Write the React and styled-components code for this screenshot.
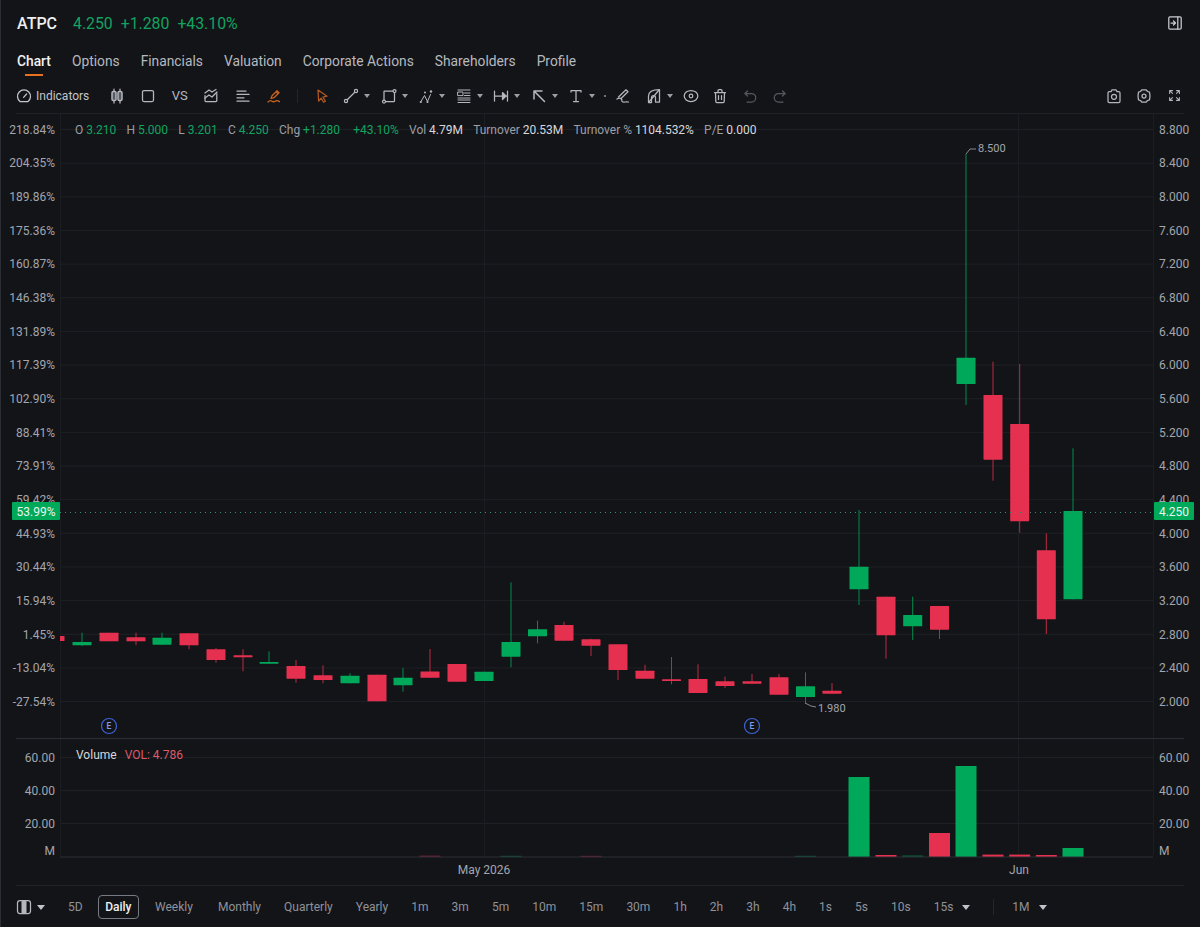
import React from 'react';
import styled, {createGlobalStyle} from 'styled-components';

const GlobalStyle = createGlobalStyle`
    html, body{
        margin: 0;
        padding: 0;
        background: #131418;
    }
    body{
        font-family: Roboto, "Liberation Sans", sans-serif;
    }
`;

const GREEN = '#00a85a';
const RED = '#e5304f';
const GRID = '#1e2026';
const GRID_V = '#1b1d22';

const Page = styled.div`
    width: 1200px;
    height: 927px;
    display: flex;
    flex-direction: column;
    background: #131418;
    box-shadow: inset 1px 0 0 #2b2e35;
    overflow: hidden;
`;

const TitleRow = styled.div`
    height: 46px;
    display: flex;
    align-items: center;
    padding: 0 16px 0 17px;
    font-size: 15.8px;
    color: #12a361;
`;

const Ticker = styled.span`
    color: #eceef0;
    font-weight: 500;
    font-size: 16px;
    margin-right: 16px;
`;

const Quote = styled.span`
    margin-right: 8px;
`;

const CollapseButton = styled.div`
    margin-left: auto;
    margin-right: 1px;
    color: #c9cbd0;
`;

const Tabs = styled.div`
    height: 32px;
    display: flex;
    gap: 21px;
    padding-left: 17px;
`;

const Tab = styled.div`
    position: relative;
    font-size: 13.8px;
    line-height: 30px;
    color: ${p => p.$active ? '#f0f1f3' : '#b6b9bf'};
    font-weight: ${p => p.$active ? 500 : 400};

    &::after{
        content: ${p => p.$active ? "''" : 'none'};
        position: absolute;
        left: 8px;
        right: 8px;
        bottom: 2px;
        height: 2px;
        background: #e8701f;
    }
`;

const Toolbar = styled.div`
    height: 35px;
    display: flex;
    align-items: center;
    padding-left: 16px;
    color: #b4b7bd;
    font-size: 12px;
`;

const IndicatorsButton = styled.div`
    width: 85px;
    display: flex;
    align-items: center;
    gap: 4px;
    color: #c3c5ca;
`;

const Slot = styled.div`
    width: ${p => p.$w || 31.5}px;
    margin-left: ${p => p.$ml || 0}px;
    display: flex;
    justify-content: center;
    align-items: center;
    font-size: 13px;
    flex: none;
    color: ${p => p.$accent ? p.$accent : p.$dim ? '#55585f' : 'inherit'};
`;

const CaretTool = styled.div`
    width: ${p => p.$w || 37.5}px;
    margin-left: ${p => p.$ml || 0}px;
    display: flex;
    align-items: center;
    gap: 5px;
    flex: none;
`;

const Caret = styled.span`
    width: 0;
    height: 0;
    border-left: ${p => p.$bright ? 4 : 3.5}px solid transparent;
    border-right: ${p => p.$bright ? 4 : 3.5}px solid transparent;
    border-top: ${p => p.$bright ? 5 : 4}px solid ${p => p.$bright ? '#c0c3c8' : '#9a9da4'};
    margin-top: 1px;
`;

const VDivider = styled.span`
    width: 1px;
    height: ${p => p.$h || 14}px;
    background: #24262c;
    margin-left: ${p => p.$ml || 0}px;
    flex: none;
`;

const TinyDot = styled.span`
    width: 2px;
    height: 2px;
    border-radius: 50%;
    background: #8d9097;
    margin-left: -2px;
    flex: none;
`;

const RightTools = styled.div`
    margin-left: auto;
    margin-right: 10px;
    display: flex;
`;

const Rule = styled.div`
    height: 1px;
    margin: 0 16px;
    flex: none;
    background: ${p => p.$strong ? '#2c2f36' : '#1f2127'};
`;

const PricePane = styled.div`
    position: relative;
    height: 624px;
    flex: none;
`;

const Legend = styled.div`
    position: absolute;
    left: 75px;
    top: 8px;
    display: flex;
    gap: 10.25px;
    font-size: 12px;
    line-height: 16px;
    letter-spacing: -0.02px;
    color: #9b9ea5;
    white-space: nowrap;
`;

const LegendItem = styled.span`
    margin-left: ${p => p.$ml || 0}px;
`;

const Value = styled.span`
    color: ${p => p.$up ? '#12a361' : '#d6d8db'};
`;

const VolumePane = styled.div`
    position: relative;
    height: 146px;
    flex: none;
`;

const VolumeLegend = styled.div`
    position: absolute;
    left: 76px;
    top: 8px;
    display: flex;
    gap: 8px;
    font-size: 12px;
    line-height: 16px;
    color: #d6d8db;
`;

const VolumeValue = styled.span`
    color: #dc5b68;
`;

const ChartSvg = styled.svg`
    display: block;
    width: 1200px;
    height: 100%;
    font-family: Roboto, "Liberation Sans", sans-serif;
    font-size: 12px;
`;

const BottomBar = styled.div`
    flex: 1;
    display: flex;
    align-items: center;
    padding-left: 16px;
    font-size: 12px;
    color: #8f929a;
`;

const LayoutSwitch = styled.div`
    display: flex;
    align-items: center;
    gap: 5px;
    margin-right: 15px;
    color: #b4b7bd;
`;

const Periods = styled.div`
    display: flex;
    align-items: center;
    gap: 7.05px;
`;

const Period = styled.div`
    height: 24px;
    line-height: 22px;
    padding: 0 ${p => p.$active ? 6.5 : 7}px;
    margin-left: ${p => p.$ml || 0}px;
    box-sizing: border-box;
    border: 1px solid ${p => p.$active ? '#767a83' : 'transparent'};
    border-radius: 4px;
    display: flex;
    align-items: center;
    gap: 9px;
    color: ${p => p.$active ? '#eef0f2' : 'inherit'};
    font-weight: ${p => p.$active ? 500 : 400};
`;

const Icon = styled.svg.attrs({viewBox: '0 0 16 16', fill: 'none', stroke: 'currentColor', strokeWidth: 1.25})`
    width: ${p => p.$size || 16}px;
    height: ${p => p.$size || 16}px;
    display: block;
    flex: none;
    stroke-linecap: round;
    stroke-linejoin: round;
`;

const leftLabels = ['218.84%', '204.35%', '189.86%', '175.36%', '160.87%', '146.38%', '131.89%', '117.39%', '102.90%', '88.41%', '73.91%', '59.42%', '44.93%', '30.44%', '15.94%', '1.45%', '-13.04%', '-27.54%'];
const rightLabels = ['8.800', '8.400', '8.000', '7.600', '7.200', '6.800', '6.400', '6.000', '5.600', '5.200', '4.800', '4.400', '4.000', '3.600', '3.200', '2.800', '2.400', '2.000'];

// [x, up, wickTop, bodyTop, bodyBottom, wickBottom]
const candles = [
    [55, 0, 636, 636, 641, 641],
    [82, 1, 632.7, 642, 645.3, 646],
    [109, 0, 632.7, 632.7, 641.3, 641.3],
    [136, 0, 632.7, 637.3, 641.3, 645],
    [162, 1, 632.7, 637.7, 644.7, 645],
    [189, 0, 633.3, 633.3, 645.3, 649.3],
    [216, 0, 648, 649.3, 660, 662.7],
    [243, 0, 649.3, 655.3, 657.3, 671.3],
    [269, 1, 651.3, 662, 663.7, 663.7],
    [296, 0, 660, 666, 678.7, 682.7],
    [323, 0, 665.3, 675.3, 680, 683.3],
    [350, 1, 673.3, 675.7, 683.3, 683.3],
    [377, 0, 674.7, 674.7, 701.3, 701.3],
    [403, 1, 668, 677.7, 685.3, 691.7],
    [430, 0, 649, 671.5, 677.8, 678],
    [457, 0, 664, 664, 681.7, 681.7],
    [484, 1, 671.7, 671.7, 681, 681],
    [511, 1, 582.3, 642, 656.7, 667.3],
    [537.5, 1, 620.7, 629.3, 636.3, 643.3],
    [564, 0, 621.7, 625, 640.7, 640.7],
    [591, 0, 638.7, 639.3, 645.7, 656],
    [618, 0, 644.3, 644.3, 670, 680],
    [645, 0, 664.7, 670.7, 678.7, 678.7],
    [671.5, 0, 657, 679.3, 681, 684.3],
    [698, 0, 664.3, 679, 693, 693],
    [725, 0, 676.7, 681.3, 686, 688],
    [752, 0, 674, 681.3, 683.7, 683.7],
    [779, 0, 674, 677.3, 694.7, 694.7],
    [805.5, 1, 672.3, 686.3, 697, 703.3],
    [832, 0, 683, 690.7, 693.7, 693.7],
    [859, 1, 510, 566.7, 589.3, 605],
    [886, 0, 596.7, 596.7, 635.3, 658.7],
    [912.7, 1, 596.7, 615, 626.3, 640],
    [939.5, 0, 606, 606, 629.7, 639],
    [966, 1, 154, 357.7, 384, 405],
    [993, 0, 361.7, 395, 459.7, 480.7],
    [1019.7, 0, 364, 424, 521.3, 532.7],
    [1046.3, 0, 533.3, 550.3, 619.3, 634],
    [1073, 1, 448.3, 511, 599.3, 599.3],
];

// [x, up, top] - bars sit on the 856.5 baseline
const volumes = [
    [430, 0, 855.6], [511, 1, 855.8], [591, 0, 855.8], [805.5, 1, 855.8],
    [859, 1, 777], [886, 0, 855], [912.7, 1, 855.4], [939.5, 0, 833],
    [966, 1, 766], [993, 0, 854.6], [1019.7, 0, 854.6], [1046.3, 0, 855], [1073, 1, 848],
];

const periods = ['1m', '3m', '5m', '10m', '15m', '30m', '1h', '2h', '3h', '4h', '1s', '5s', '10s'];

function Candle({x, up, wickTop, bodyTop, bodyBottom, wickBottom}){
    const color = up ? GREEN : RED;
    return (
        <g>
            <line x1={x} x2={x} y1={wickTop} y2={wickBottom} stroke={color} strokeOpacity="0.8" />
            <rect x={x - 9.5} y={bodyTop} width="19" height={Math.max(bodyBottom - bodyTop, 1.5)} rx="0.6" fill={color} />
        </g>
    );
}

function EarningsMark({x}){
    return (
        <g>
            <circle cx={x} cy="726" r="7.5" fill="none" stroke="#3d63d6" strokeWidth="1.2" />
            <text x={x} y="729" textAnchor="middle" fontSize="8.5" fontWeight="500" fill="#7f9cf0">E</text>
        </g>
    );
}

function PriceChart(){
    return (
        <ChartSvg viewBox="0 114 1200 624">
            {rightLabels.map((label, i) => {
                const y = 129.5 + i * 33.65;
                return <line key={label} x1="60" x2="1153" y1={y} y2={y} stroke={GRID} />;
            })}
            <line x1="60.5" x2="60.5" y1="114" y2="738" stroke={GRID_V} />
            <line x1="1153.5" x2="1153.5" y1="114" y2="738" stroke={GRID_V} />
            <line x1="484.5" x2="484.5" y1="114" y2="738" stroke={GRID_V} />
            <line x1="1018.5" x2="1018.5" y1="114" y2="738" stroke={GRID_V} />

            <svg x="60" y="114" width="1093" height="624" viewBox="60 114 1093 624">
                {candles.map(([x, up, wickTop, bodyTop, bodyBottom, wickBottom]) => (
                    <Candle key={x} x={x} up={up} wickTop={wickTop} bodyTop={bodyTop} bodyBottom={bodyBottom} wickBottom={wickBottom} />
                ))}
            </svg>

            <line x1="60" x2="1153" y1="512.5" y2="512.5" stroke="#3d8f6b" strokeDasharray="1 4" />

            {leftLabels.map((label, i) => (
                <text key={label} x="55" y={133.8 + i * 33.65} textAnchor="end" fill="#a3a6ad">{label}</text>
            ))}
            {rightLabels.map((label, i) => (
                <text key={label} x="1159" y={133.8 + i * 33.65} fill="#a3a6ad">{label}</text>
            ))}

            <rect x="12" y="502" width="48" height="18" rx="1" fill={GREEN} />
            <text x="36" y="515.5" textAnchor="middle" fill="#e8f5ee">53.99%</text>
            <rect x="1154" y="502" width="40" height="18" rx="1" fill={GREEN} />
            <text x="1174" y="515.5" textAnchor="middle" fill="#e8f5ee">4.250</text>

            <polyline points="966,154 970,149 976,149" fill="none" stroke="#a3a6ad" strokeWidth="0.8" />
            <text x="978" y="152" fontSize="11" fill="#a3a6ad">8.500</text>
            <polyline points="805,703 811,706 816,707" fill="none" stroke="#a3a6ad" strokeWidth="0.8" />
            <text x="818" y="712" fontSize="11" fill="#a3a6ad">1.980</text>

            <EarningsMark x={109} />
            <EarningsMark x={752} />
        </ChartSvg>
    );
}

function VolumeChart(){
    const gridY = [757, 790, 823];
    const ticks = ['60.00', '40.00', '20.00'];
    return (
        <ChartSvg viewBox="0 739 1200 146">
            {gridY.map(y => <line key={y} x1="60" x2="1153" y1={y + 0.5} y2={y + 0.5} stroke={GRID} />)}
            <line x1="60.5" x2="60.5" y1="739" y2="856" stroke={GRID_V} />
            <line x1="1153.5" x2="1153.5" y1="739" y2="856" stroke={GRID_V} />
            <line x1="484.5" x2="484.5" y1="739" y2="856" stroke={GRID_V} />
            <line x1="1018.5" x2="1018.5" y1="739" y2="856" stroke={GRID_V} />

            {volumes.map(([x, up, top]) => (
                <rect key={x} x={x - 10.5} y={top} width="21" height={857 - top} fill={up ? GREEN : RED} fillOpacity={857 - top < 2 ? 0.45 : 1} />
            ))}
            <line x1="60" x2="1153" y1="857" y2="857" stroke="#2c2f36" />

            {ticks.map((tick, i) => (
                <React.Fragment key={tick}>
                    <text x="55" y={gridY[i] + 4.5} textAnchor="end" fill="#a3a6ad">{tick}</text>
                    <text x="1159" y={gridY[i] + 4.5} fill="#a3a6ad">{tick}</text>
                </React.Fragment>
            ))}
            <text x="55" y="855" textAnchor="end" fill="#a3a6ad">M</text>
            <text x="1159" y="855" fill="#a3a6ad">M</text>

            <text x="484" y="874" textAnchor="middle" fill="#a3a6ad">May 2026</text>
            <text x="1019" y="874" textAnchor="middle" fill="#a3a6ad">Jun</text>
        </ChartSvg>
    );
}

const icons = {
    gauge: <><path d="M4 13.5a6.5 6.5 0 1 1 8 0z" /><path d="M7.6 9.4l3-3.4" /></>,
    candles: <><path d="M5 1v14M11 1v14" /><rect x="3" y="3.500" width="4" height="9" rx="1.300" fill="#55585f" strokeWidth="1.500" /><rect x="9" y="3.500" width="4" height="9" rx="1.300" fill="#55585f" strokeWidth="1.500" /></>,
    square: <rect x="2.500" y="2.500" width="11" height="11" rx="1.500" />,
    combo: <><path d="M2 7.500v5.200c0 .6.400.8.900.8h10c.6 0 .9-.3.900-.8V5.500" /><path d="M2 10l4-3 3 2 5-5" /><path d="M2 5l4-3 3 2 4-2.500" /></>,
    list: <><path d="M2 3h9M2 6.400h12M2 9.800h7M2 13.200h12" /></>,
    pen: <><path d="M5 10.500l1-2.800 5-5 2 2-5 5zM10 3.700l2 2" /><path d="M2 14c2-2 3-1.500 4-.8s2 .8 3.200 0 2.400-.8 4.300.4" /></>,
    cursor: <path d="M4 2l9 6.200-4 1 2.400 4-1.800 1-2.400-4L4.600 13z" />,
    line: <><circle cx="3" cy="13" r="1.600" /><circle cx="13" cy="3" r="1.600" /><path d="M4.200 11.800l7.600-7.600" /></>,
    rect: <><rect x="3" y="3" width="10.500" height="10.500" rx="0.500" /><circle cx="3" cy="13.500" r="1.500" fill="#131418" /><circle cx="13.500" cy="3" r="1.500" fill="#131418" /></>,
    nodes: <><path d="M3 13.500L6.500 7.500l3 6 3-7" strokeWidth="1" /><circle cx="7" cy="4.500" r="1" fill="currentColor" stroke="none" /><circle cx="13" cy="3.500" r="1.200" fill="currentColor" stroke="none" /><circle cx="2.800" cy="14" r="1.100" fill="currentColor" stroke="none" /><circle cx="9.500" cy="14" r="1.100" fill="currentColor" stroke="none" /></>,
    fib: <><path d="M2 2h12M2 12h12M2 14.500h12M8.500 5h5.500M8.500 7.500h5.500M2 10h12" strokeWidth="1" /><rect x="2" y="4" width="5" height="3.600" strokeWidth="1" /></>,
    measure: <><path d="M1.500 3v10M14.500 3v10M1.500 8h13" /><path d="M9.500 4.500L13 8l-3.500 3.500z" fill="currentColor" /></>,
    arrow: <path d="M3 3h8M3 3v8M3 3l10.500 10.500" strokeWidth="1.500" />,
    text: <path d="M3 4V2.500h10V4M8 2.500v11M5.500 13.500h5" />,
    magnet: <><path d="M3.500 9L11 1.800l2 2L6 10.500" /><path d="M2 11c2-1.500 3.500-1 4.500 0s-.5 2 1 2.800 3-.3 6 .2" /></>,
    leaf: <><path d="M2.500 14.500V8C2.500 4 6 1.500 13.500 1.500V14h-4V9.500a2 2 0 0 0-4 0v5z" /><path d="M3 14L13 2" /></>,
    eye: <><ellipse cx="8" cy="8" rx="6.800" ry="5.500" /><circle cx="8" cy="8" r="1.800" /></>,
    trash: <><path d="M3.500 4.500h9l-.3 9c0 .6-.5 1-1 1H4.800c-.5 0-1-.4-1-1zM2.500 4.500h11M6 4.500V2.500c0-.5.300-1 1-1h2c.6 0 1 .4 1 1v2M6.500 7.500v4M9.500 7.500v4" /></>,
    undo: <><path d="M3 5.500h6.500a4 4 0 0 1 0 8.500H5" /><path d="M5.500 3L3 5.500 5.500 8" /></>,
    redo: <><path d="M13 5.500H6.500a4 4 0 0 0 0 8.500H11" /><path d="M10.500 3L13 5.500 10.500 8" /></>,
    camera: <><path d="M2 5c0-.8.500-1.300 1.300-1.300h1.700L6 1.800h4l1 1.900h1.700c.8 0 1.300.5 1.300 1.300v8.200c0 .8-.500 1.300-1.300 1.300H3.300c-.8 0-1.300-.5-1.300-1.300z" /><circle cx="8" cy="8.800" r="2.500" /></>,
    settings: <><path d="M5.800 1.800h4.400l1.300 1.700 2 .7.500 3.800-.5 3.800-2 .7-1.300 1.700H5.800l-1.300-1.700-2-.7L2 8l.5-3.800 2-.7z" /><circle cx="8" cy="8" r="2" /></>,
    fullscreen: <path d="M2 5.500V2h3.500M2.500 2.500l3 3M14 5.500V2h-3.500M13.500 2.500l-3 3M2 10.500V14h3.500M2.500 13.500l3-3M14 10.500V14h-3.500M13.500 13.500l-3-3" />,
    collapse: <><rect x="1.800" y="1.800" width="12.400" height="12.400" rx="1.200" /><path d="M10.800 2v12M4 8h4.200M6.500 6l2 2-2 2" /></>,
    layout: <><rect x="1.500" y="1.500" width="13" height="13" rx="2.500" /><rect x="5.500" y="2" width="5" height="12" fill="currentColor" stroke="none" /></>,
};

function Glyph({name, size}){
    return <Icon $size={size}>{icons[name]}</Icon>;
}

export default function App(){
    const drawingTools = ['line', 'rect', 'nodes', 'fib', 'measure', 'arrow', 'text'];

    return (
        <Page>
            <GlobalStyle />
            <TitleRow>
                <Ticker>ATPC</Ticker>
                <Quote>4.250</Quote>
                <Quote>+1.280</Quote>
                <Quote>+43.10%</Quote>
                <CollapseButton><Glyph name="collapse" /></CollapseButton>
            </TitleRow>

            <Tabs>
                <Tab $active>Chart</Tab>
                <Tab>Options</Tab>
                <Tab>Financials</Tab>
                <Tab>Valuation</Tab>
                <Tab>Corporate Actions</Tab>
                <Tab>Shareholders</Tab>
                <Tab>Profile</Tab>
            </Tabs>

            <Toolbar>
                <IndicatorsButton><Glyph name="gauge" />Indicators</IndicatorsButton>
                <Slot><Glyph name="candles" /></Slot>
                <Slot><Glyph name="square" /></Slot>
                <Slot>VS</Slot>
                <Slot><Glyph name="combo" /></Slot>
                <Slot><Glyph name="list" /></Slot>
                <Slot $accent="#c8641e"><Glyph name="pen" /></Slot>
                <VDivider $ml={7} />
                <Slot $w={30} $ml={9} $accent="#b3591f"><Glyph name="cursor" /></Slot>
                {drawingTools.map((name, i) => (
                    <CaretTool key={name} $ml={i === 0 ? 6 : 0}>
                        <Glyph name={name} />
                        <Caret />
                    </CaretTool>
                ))}
                <TinyDot />
                <Slot $w={30} $ml={2}><Glyph name="magnet" /></Slot>
                <CaretTool $w={30} $ml={8}>
                    <Glyph name="leaf" />
                    <Caret />
                </CaretTool>
                <Slot $w={30}><Glyph name="eye" /></Slot>
                <Slot $w={29.5}><Glyph name="trash" /></Slot>
                <Slot $w={30} $dim><Glyph name="undo" /></Slot>
                <Slot $w={30} $dim><Glyph name="redo" /></Slot>
                <RightTools>
                    <Slot $w={30.5}><Glyph name="camera" /></Slot>
                    <Slot $w={30.5}><Glyph name="settings" /></Slot>
                    <Slot $w={30.5}><Glyph name="fullscreen" size={13} /></Slot>
                </RightTools>
            </Toolbar>
            <Rule />

            <PricePane>
                <PriceChart />
                <Legend>
                    <LegendItem>O <Value $up>3.210</Value></LegendItem>
                    <LegendItem>H <Value $up>5.000</Value></LegendItem>
                    <LegendItem>L <Value $up>3.201</Value></LegendItem>
                    <LegendItem>C <Value $up>4.250</Value></LegendItem>
                    <LegendItem>Chg <Value $up>+1.280</Value></LegendItem>
                    <LegendItem $ml={3}><Value $up>+43.10%</Value></LegendItem>
                    <LegendItem>Vol <Value>4.79M</Value></LegendItem>
                    <LegendItem>Turnover <Value>20.53M</Value></LegendItem>
                    <LegendItem>Turnover % <Value>1104.532%</Value></LegendItem>
                    <LegendItem>P/E <Value>0.000</Value></LegendItem>
                </Legend>
            </PricePane>
            <Rule $strong />

            <VolumePane>
                <VolumeChart />
                <VolumeLegend>
                    <span>Volume</span>
                    <VolumeValue>VOL: 4.786</VolumeValue>
                </VolumeLegend>
            </VolumePane>
            <Rule />

            <BottomBar>
                <LayoutSwitch>
                    <Glyph name="layout" />
                    <Caret $bright />
                </LayoutSwitch>
                <Periods>
                    <Period>5D</Period>
                    <Period $active>Daily</Period>
                    <Period $ml={1}>Weekly</Period>
                    <Period $ml={2}>Monthly</Period>
                    <Period>Quarterly</Period>
                    <Period>Yearly</Period>
                    {periods.map(p => <Period key={p}>{p}</Period>)}
                    <Period>15s<Caret $bright /></Period>
                    <VDivider $h={16} $ml={7} />
                    <Period $ml={3.8}>1M<Caret $bright /></Period>
                </Periods>
            </BottomBar>
        </Page>
    );
}
